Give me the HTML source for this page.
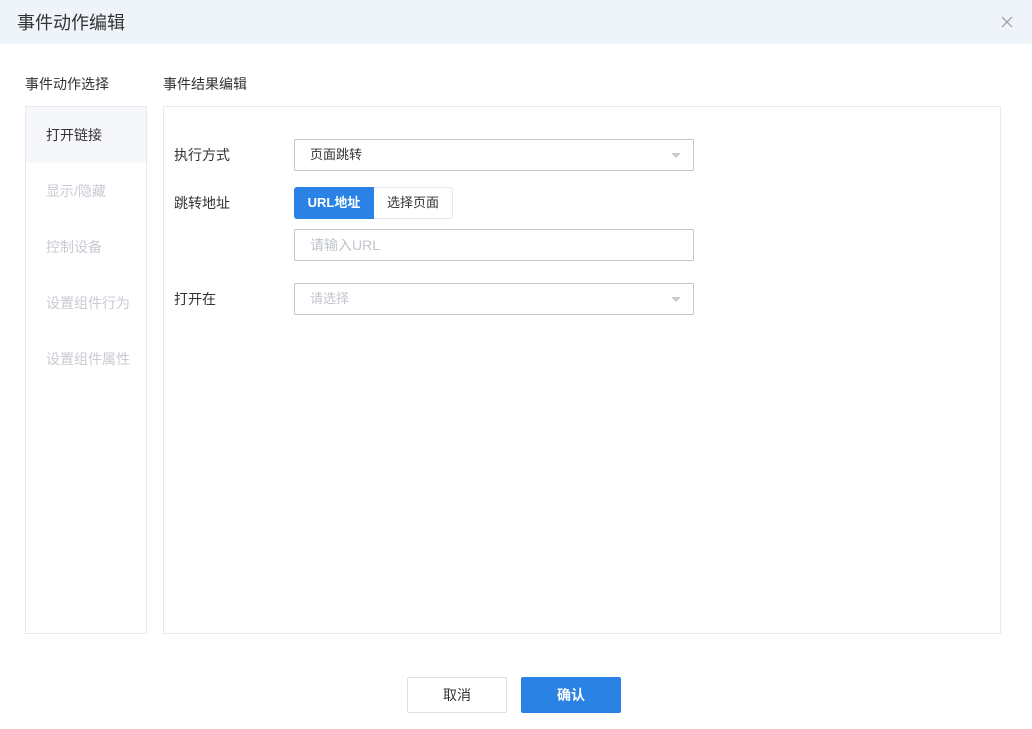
<!DOCTYPE html>
<html><head><meta charset="utf-8"><style>
*{box-sizing:border-box;margin:0;padding:0}
body{width:1032px;height:729px;background:#fff;font-family:"Liberation Sans","Noto Sans CJK SC",sans-serif;position:relative;overflow:hidden;color:#333}
.a{position:absolute}
.hd{left:0;top:0;width:1032px;height:44px;background:#eff3fa}
.t{left:17px;top:9px;font-size:18px;color:#333}
.x{left:999px;top:14px;width:16px;height:16px}
.lbl{font-size:14px;color:#333}
.left{left:25px;top:106px;width:122px;height:528px;border:1px solid #e6e9f2}
.right{left:163px;top:106px;width:838px;height:528px;border:1px solid #e6e9f2}
.item{left:26px;width:120px;height:56px;font-size:14px;padding-left:20px;line-height:56px;color:#c8cbd2}
.sel{left:294px;width:400px;height:32px;border:1px solid #c2c6d3;border-radius:2px;font-size:13px;padding-left:15px;line-height:30px}
.arr{right:12px;top:13px;width:0;height:0;border-left:5px solid transparent;border-right:5px solid transparent;border-top:5px solid #c8ccd4}
.btn{height:36px;font-size:14px;text-align:center;line-height:34px;border-radius:2px}
</style></head><body>
<div class="a hd"></div>
<div class="a t">事件动作编辑</div>
<svg class="a x" viewBox="0 0 16 16"><path d="M3 3L13 13M13 3L3 13" stroke="#999" stroke-width="1.2"/></svg>
<div class="a lbl" style="left:25px;top:74px">事件动作选择</div>
<div class="a lbl" style="left:163px;top:74px">事件结果编辑</div>
<div class="a left"></div>
<div class="a right"></div>
<div class="a item" style="top:107px;background:#f5f7fb;color:#333">打开链接</div>
<div class="a item" style="top:163px">显示/隐藏</div>
<div class="a item" style="top:219px">控制设备</div>
<div class="a item" style="top:275px">设置组件行为</div>
<div class="a item" style="top:331px">设置组件属性</div>
<div class="a lbl" style="left:174px;top:145px">执行方式</div>
<div class="a lbl" style="left:174px;top:193px">跳转地址</div>
<div class="a lbl" style="left:174px;top:289px">打开在</div>
<div class="a sel" style="top:139px">页面跳转<div class="a arr"></div></div>
<div class="a" style="left:294px;top:187px;width:80px;height:32px;background:#2a82e4;color:#fff;font-size:13px;font-weight:bold;line-height:32px;text-align:center;border-radius:3px 0 0 3px">URL地址</div>
<div class="a" style="left:374px;top:187px;width:79px;height:32px;border:1px solid #e4e7f0;border-left:none;font-size:13px;line-height:30px;text-align:center;border-radius:0 3px 3px 0">选择页面</div>
<div class="a sel" style="top:229px;color:#c0c4cc;font-size:14px">请输入URL</div>
<div class="a sel" style="top:283px;color:#c0c4cc">请选择<div class="a arr"></div></div>
<div class="a btn" style="left:407px;top:677px;width:100px;border:1px solid #dcdfe6">取消</div>
<div class="a btn" style="left:521px;top:677px;width:100px;background:#2a82e4;color:#fff;line-height:36px;font-weight:bold">确认</div>
</body></html>
